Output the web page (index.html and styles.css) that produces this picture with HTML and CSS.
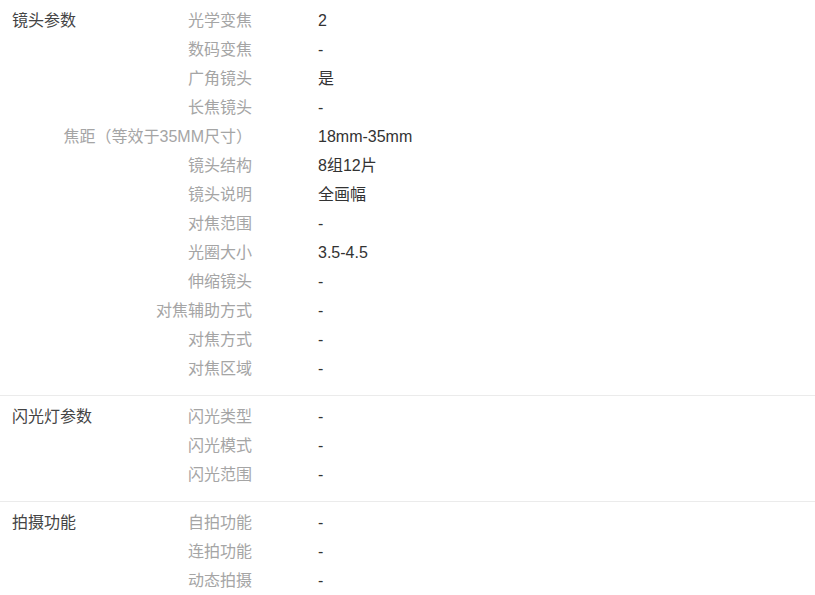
FILE: index.html
```html
<!DOCTYPE html>
<html lang="zh-CN">
<head>
    <meta charset="UTF-8">
    <meta name="viewport" content="width=device-width, initial-scale=1.0">
    <title>参数</title>
    <link rel="stylesheet" href="styles.css">
</head>
<body>
    <div class="spec-table">
        <div class="section">
            <div class="section-title">镜头参数</div>
            <div class="rows">
                <div class="row"><span class="label">光学变焦</span><span class="value">2</span></div>
                <div class="row"><span class="label">数码变焦</span><span class="value">-</span></div>
                <div class="row"><span class="label">广角镜头</span><span class="value">是</span></div>
                <div class="row"><span class="label">长焦镜头</span><span class="value">-</span></div>
                <div class="row"><span class="label">焦距（等效于35MM尺寸）</span><span class="value">18mm-35mm</span></div>
                <div class="row"><span class="label">镜头结构</span><span class="value">8组12片</span></div>
                <div class="row"><span class="label">镜头说明</span><span class="value">全画幅</span></div>
                <div class="row"><span class="label">对焦范围</span><span class="value">-</span></div>
                <div class="row"><span class="label">光圈大小</span><span class="value">3.5-4.5</span></div>
                <div class="row"><span class="label">伸缩镜头</span><span class="value">-</span></div>
                <div class="row"><span class="label">对焦辅助方式</span><span class="value">-</span></div>
                <div class="row"><span class="label">对焦方式</span><span class="value">-</span></div>
                <div class="row"><span class="label">对焦区域</span><span class="value">-</span></div>
            </div>
        </div>

        <div class="section">
            <div class="section-title">闪光灯参数</div>
            <div class="rows">
                <div class="row"><span class="label">闪光类型</span><span class="value">-</span></div>
                <div class="row"><span class="label">闪光模式</span><span class="value">-</span></div>
                <div class="row"><span class="label">闪光范围</span><span class="value">-</span></div>
            </div>
        </div>

        <div class="section">
            <div class="section-title">拍摄功能</div>
            <div class="rows">
                <div class="row"><span class="label">自拍功能</span><span class="value">-</span></div>
                <div class="row"><span class="label">连拍功能</span><span class="value">-</span></div>
                <div class="row"><span class="label">动态拍摄</span><span class="value">-</span></div>
            </div>
        </div>
    </div>
</body>
</html>
```

FILE: styles.css
```css
* {
    margin: 0;
    padding: 0;
    box-sizing: border-box;
}

body {
    font-family: "Liberation Sans", "Noto Sans CJK SC", sans-serif;
    font-size: 16px;
    color: #333;
    background: #fff;
}

.section {
    display: flex;
    padding: 6px 0 12px;
    border-bottom: 1px solid #ebebeb;
}

.section-title {
    width: 152px;
    padding-left: 12px;
    line-height: 29px;
    color: #444;
}

.rows {
    flex: 1;
}

.row {
    display: flex;
    height: 29px;
    line-height: 29px;
}

.label {
    width: 100px;
    display: flex;
    justify-content: flex-end;
    white-space: nowrap;
    color: #a5a5a5;
}

.value {
    padding-left: 66px;
    color: #333;
}
```
